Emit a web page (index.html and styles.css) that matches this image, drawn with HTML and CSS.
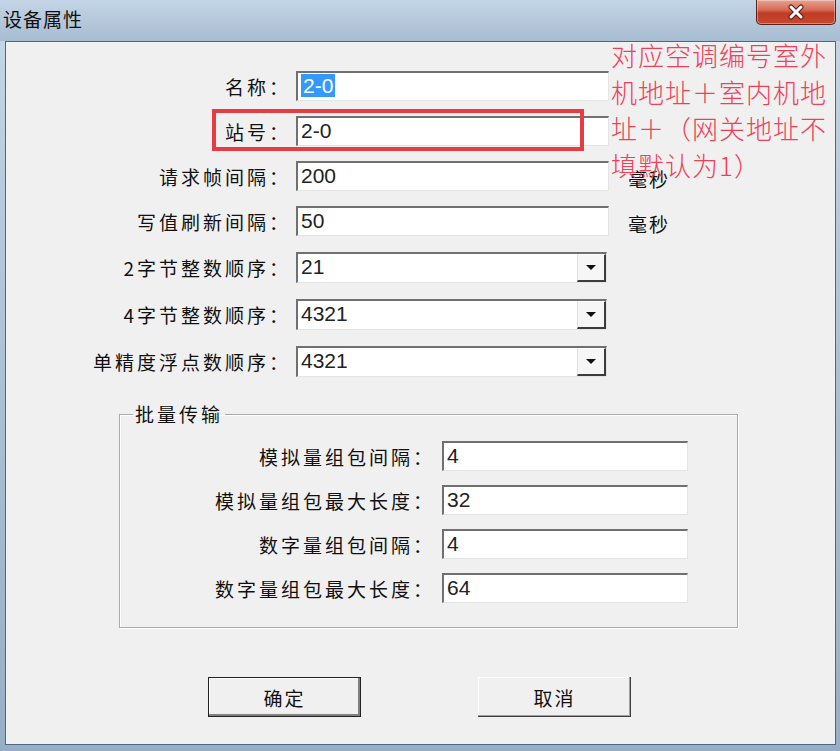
FILE: index.html
```html
<!DOCTYPE html>
<html lang="zh-CN">
<head>
    <meta charset="UTF-8">
    <title>设备属性</title>
    <link rel="stylesheet" href="styles.css">
</head>
<body>
    <div class="window">
        <div class="titlebar">
            <span class="title">设备属性</span>
            <div class="close">
                <svg width="18" height="16" viewBox="0 0 18 16">
                    <path d="M4 3 L14 13 M14 3 L4 13" stroke="#5a1a10" stroke-width="5" stroke-linecap="round"/>
                    <path d="M4 3 L14 13 M14 3 L4 13" stroke="#ffffff" stroke-width="3" stroke-linecap="round"/>
                </svg>
            </div>
        </div>

        <div class="client">
            <div class="props">
                <div class="row">
                    <label class="label">名称：</label>
                    <div class="input"><span class="selected">2-0</span></div>
                </div>
                <div class="row">
                    <label class="label">站号：</label>
                    <div class="input">2-0</div>
                </div>
                <div class="row">
                    <label class="label">请求帧间隔：</label>
                    <div class="input">200</div>
                    <span class="unit">毫秒</span>
                </div>
                <div class="row">
                    <label class="label">写值刷新间隔：</label>
                    <div class="input">50</div>
                    <span class="unit">毫秒</span>
                </div>
                <div class="row row-combo">
                    <label class="label">2字节整数顺序：</label>
                    <div class="input combo"><span class="value">21</span><span class="drop"></span></div>
                </div>
                <div class="row row-combo">
                    <label class="label">4字节整数顺序：</label>
                    <div class="input combo"><span class="value">4321</span><span class="drop"></span></div>
                </div>
                <div class="row row-combo">
                    <label class="label">单精度浮点数顺序：</label>
                    <div class="input combo"><span class="value">4321</span><span class="drop"></span></div>
                </div>
            </div>

            <fieldset class="batch">
                <legend>批量传输</legend>
                <div class="batch-rows">
                    <div class="row">
                        <label class="label">模拟量组包间隔：</label>
                        <div class="input">4</div>
                    </div>
                    <div class="row">
                        <label class="label">模拟量组包最大长度：</label>
                        <div class="input">32</div>
                    </div>
                    <div class="row">
                        <label class="label">数字量组包间隔：</label>
                        <div class="input">4</div>
                    </div>
                    <div class="row">
                        <label class="label">数字量组包最大长度：</label>
                        <div class="input">64</div>
                    </div>
                </div>
            </fieldset>

            <div class="actions">
                <button class="btn btn-default">确定</button>
                <button class="btn">取消</button>
            </div>

            <!-- annotation drawn over the dialog -->
            <div class="mark"></div>
            <div class="note">对应空调编号室外<br>机地址＋室内机地<br>址＋（网关地址不<br>填默认为1）</div>
        </div>
    </div>
</body>
</html>
```

FILE: styles.css
```css
* {
    box-sizing: border-box;
}
body {
    margin: 0;
    width: 840px;
    height: 751px;
    overflow: hidden;
    font-family: "Noto Sans CJK SC", "Noto Sans", sans-serif;
    color: #111;
}
.window {
    height: 751px;
    display: flex;
    flex-direction: column;
    background: linear-gradient(180deg, #c6d8e8 0%, #b4c9dc 30%, #a7bdd2 60%, #97afc6 100%);
}
.titlebar {
    height: 41px;
    display: flex;
    justify-content: space-between;
    align-items: flex-start;
    padding-left: 3px;
    background: linear-gradient(180deg, #c3d5e6 0%, #b7cadc 45%, #a6bcd1 100%);
}
.title {
    font-size: 19px;
    line-height: 22px;
    margin-top: 8px;
    letter-spacing: 1px;
    color: #111;
}
.close {
    width: 80px;
    height: 25px;
    margin-right: 4px;
    border: 1px solid #5b2118;
    border-top: none;
    border-radius: 0 0 5px 5px;
    background: linear-gradient(180deg, #e6a292 0%, #d86c55 40%, #bf3b24 55%, #c8492f 100%);
    box-shadow: inset 0 0 0 1px rgba(255, 255, 255, 0.35);
    display: flex;
    align-items: center;
    justify-content: center;
}
.client {
    flex: 1;
    margin: 0 4px 6px 5px;
    background: #f0f0f0;
    border: 1px solid #4f6782;
    position: relative;
}

/* form rows */
.props {
    display: flex;
    flex-direction: column;
    gap: 15px;
    padding-top: 29px;
}
.row {
    display: flex;
    align-items: center;
    height: 30px;
}
.row-combo {
    height: 31px;
    margin-top: 1px;
}
.label {
    width: 285px;
    text-align: right;
    font-size: 19px;
    letter-spacing: 3px;
    margin-right: 5px;
    white-space: nowrap;
}
.input {
    width: 313px;
    height: 100%;
    background: #fff;
    border-style: solid;
    border-width: 2px 1px 1px 2px;
    border-color: #707070 #e4e4e4 #e4e4e4 #707070;
    font-family: "Liberation Sans", Arial, sans-serif;
    font-size: 21px;
    line-height: 26px;
    padding-left: 3px;
    color: #222;
}
.selected {
    background: #3399ff;
    color: #fff;
    padding: 0 2px;
}
.unit {
    margin-left: 19px;
    font-size: 19px;
    letter-spacing: 2px;
    margin-top: 4px;
}
.combo {
    display: flex;
    width: 311px;
}
.combo .value {
    flex: 1;
}
.drop {
    width: 29px;
    height: 100%;
    background: #f6f6f6;
    border-style: solid;
    border-width: 1px 2px 2px 1px;
    border-color: #ffffff #3c3c3c #3c3c3c #e0e0e0;
    display: flex;
    align-items: center;
    justify-content: center;
}
.drop::after {
    content: "";
    border-left: 5px solid transparent;
    border-right: 5px solid transparent;
    border-top: 5px solid #111;
}

/* group box */
.batch {
    margin: 24px 0 0 113px;
    width: 619px;
    border: 1px solid #ababab;
    box-shadow: inset 1px 1px 0 #fff, 1px 1px 0 #fff;
    padding: 0 0 24px 0;
}
.batch legend {
    margin-left: 13px;
    padding: 0 2px;
    font-size: 19px;
    letter-spacing: 3px;
    line-height: 26px;
}
.batch-rows {
    display: flex;
    flex-direction: column;
    gap: 14px;
    margin-top: 14px;
}
.batch .label {
    width: 315px;
    margin-right: 7px;
}
.batch .input {
    width: 246px;
}

/* buttons */
.actions {
    display: flex;
    gap: 117px;
    margin-top: 49px;
    padding-left: 202px;
}
.btn {
    width: 153px;
    height: 40px;
    background: #f0f0f0;
    border: none;
    font-family: "Noto Sans CJK SC", sans-serif;
    font-size: 19px;
    letter-spacing: 2px;
    color: #111;
    box-shadow: inset -1px -1px 0 #404040, inset -2px -2px 0 #a0a0a0, inset 1px 1px 0 #ffffff;
}
.btn-default {
    border: 1px solid #222;
    box-shadow: inset -2px -2px 0 #808080, inset 1px 1px 0 #ffffff;
}

/* red annotation */
.mark {
    position: absolute;
    left: 206px;
    top: 67px;
    width: 372px;
    height: 42px;
    border: 4px solid #e63c43;
}
.note {
    position: absolute;
    left: 605px;
    top: -5px;
    font-size: 26px;
    line-height: 36.5px;
    letter-spacing: 1px;
    font-weight: 300;
    color: #ef4058;
    white-space: nowrap;
}
```
